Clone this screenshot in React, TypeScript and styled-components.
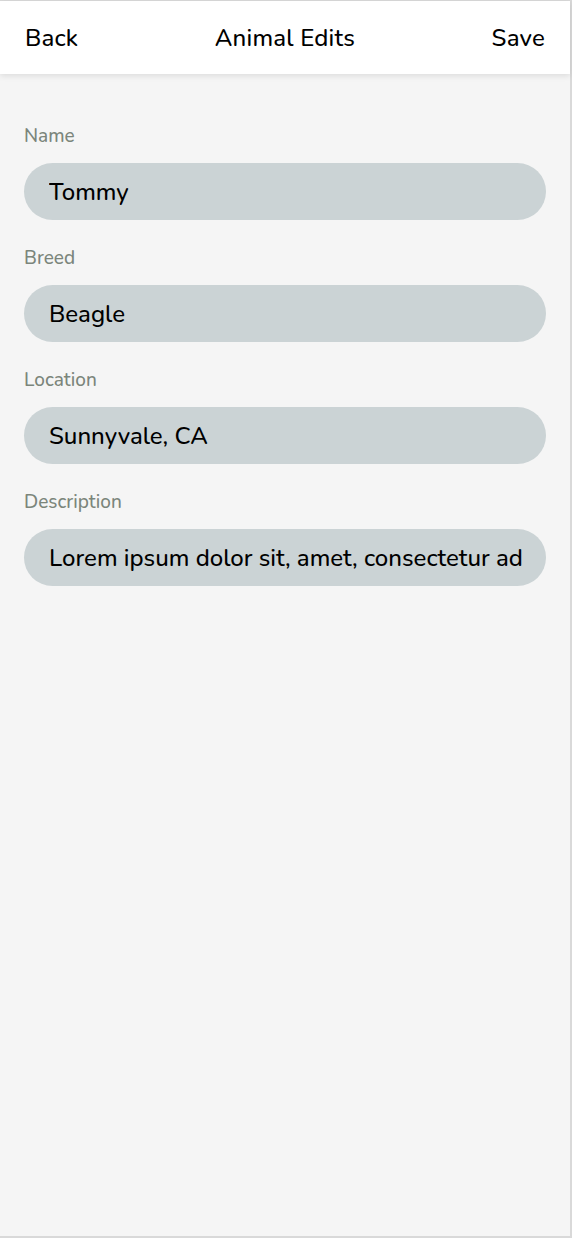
import React from "react";
import styled, { createGlobalStyle } from "styled-components";

const GlobalStyle = createGlobalStyle`
  html, body {
    margin: 0;
    padding: 0;
    background: #ffffff;
  }
  body {
    font-family: "Nunito", "Lato", "Noto Sans", sans-serif;
  }
`;

const Frame = styled.div`
  width: 570px;
  height: 1235px;
  background: #f5f5f5;
  border-top: 1px solid #d9d9d9;
  border-right: 2px solid #d9d9d9;
  border-bottom: 2px solid #d9d9d9;
  display: flex;
  flex-direction: column;
`;

const Header = styled.header`
  height: 73px;
  background: #ffffff;
  box-shadow: 0 2px 6px rgba(0, 0, 0, 0.1);
  display: flex;
  align-items: center;
  justify-content: space-between;
  padding: 0 25px;
  position: relative;
  z-index: 1;
`;

const HeaderText = styled.span`
  font-size: 24px;
  font-weight: 500;
  letter-spacing: 0.2px;
  color: #000;
`;

const Form = styled.div`
  display: flex;
  flex-direction: column;
  padding: 50px 24px 0 24px;
`;

const Field = styled.div`
  display: flex;
  flex-direction: column;
  margin-bottom: 26px;
`;

const Label = styled.label`
  font-size: 19px;
  font-weight: 500;
  line-height: 24px;
  color: #7b857b;
  margin-bottom: 15px;
`;

const Input = styled.input`
  box-sizing: border-box;
  width: 100%;
  height: 57px;
  border: none;
  outline: none;
  border-radius: 29px;
  background: #cbd3d5;
  padding: 0 24px 0 25px;
  font-family: inherit;
  font-size: 24px;
  font-weight: 500;
  color: #000;
`;

const fields = [
  { label: "Name", value: "Tommy" },
  { label: "Breed", value: "Beagle" },
  { label: "Location", value: "Sunnyvale, CA" },
  {
    label: "Description",
    value: "Lorem ipsum dolor sit, amet, consectetur adipisicing elit.",
  },
];

const App: React.FC = () => {
  return (
    <>
      <GlobalStyle />
      <Frame>
        <Header>
          <HeaderText>Back</HeaderText>
          <HeaderText>Animal Edits</HeaderText>
          <HeaderText>Save</HeaderText>
        </Header>
        <Form>
          {fields.map((f) => (
            <Field key={f.label}>
              <Label>{f.label}</Label>
              <Input readOnly value={f.value} />
            </Field>
          ))}
        </Form>
      </Frame>
    </>
  );
};

export default App;
